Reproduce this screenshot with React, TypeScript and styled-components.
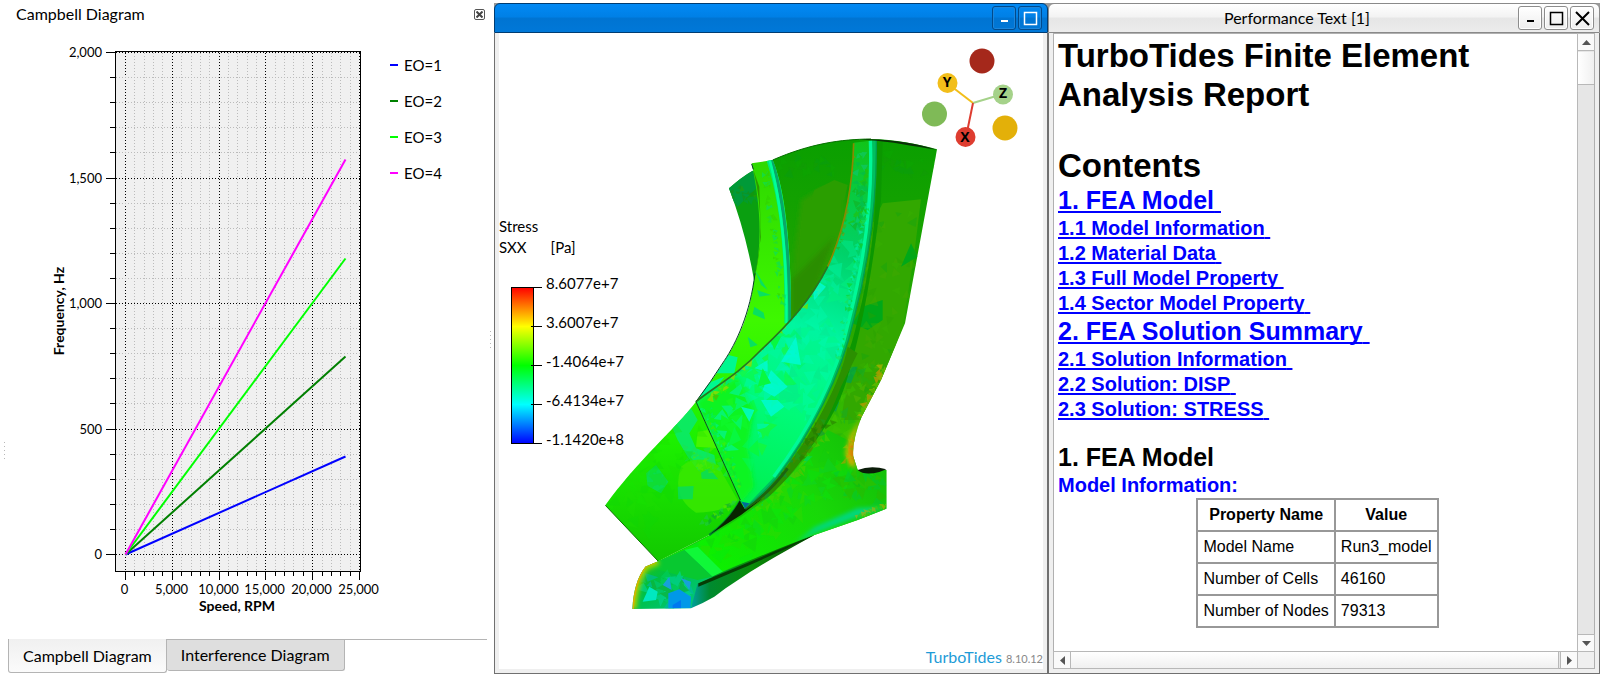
import React from 'react';
import styled, { createGlobalStyle, css } from 'styled-components';

const ui = '"Lato", "Open Sans", sans-serif';
const doc = '"Liberation Sans", Arial, sans-serif';

const Global = createGlobalStyle`
  *, *::before, *::after { box-sizing: border-box; }
  body { margin: 0; background: #fff; color: #000; font: 16px/20px ${ui}; }
  h1, h2, h3, p, ul { margin: 0; padding: 0; font-weight: inherit; }
  ul { list-style: none; }
  button { font: inherit; color: inherit; padding: 0; cursor: pointer; }
  svg { display: block; flex: none; }
`;

/* ---------- page ---------- */

const Workspace = styled.div`
  display: grid;
  grid-template-columns: 494fr 554fr 552fr;
  min-height: 100vh;
`;

/* ---------- diagram panel ---------- */

const Panel = styled.section`
  display: grid;
  grid-template-columns: 8px 1fr 7px;
  min-width: 0;
`;

const Grip = styled.span<{ $top: number }>`
  justify-self: center;
  width: 1px;
  height: 17px;
  margin-top: ${(p) => p.$top}px;
  background: repeating-linear-gradient(#b8b8b8 0 1px, transparent 1px 4px);
`;

const PanelBody = styled.div`
  display: flex;
  flex-direction: column;
  min-width: 0;
`;

const PanelHeader = styled.header`
  display: flex;
  justify-content: space-between;
  align-items: center;
  height: 28px;
  padding: 0 2px 0 8px;
`;

const PanelTitle = styled.h2`
  font-size: 16px;
`;

const CloseButton = styled.button`
  display: grid;
  place-items: center;
  width: 11px;
  height: 11px;
  border: 1px solid #555;
  border-radius: 2px;
  background: #fff;
`;

const ChartArea = styled.div`
  display: flex;
  flex: 1;
  gap: 6px;
`;

const Legend = styled.ul`
  padding-top: 19px;
`;

const LegendItem = styled.li<{ $color: string }>`
  display: flex;
  align-items: center;
  gap: 6px;
  height: 36px;
  font-size: 15px;
  &::before {
    content: '';
    width: 8px;
    height: 2px;
    background: ${(p) => p.$color};
  }
`;

const AxisText = styled.text<{ $bold?: boolean }>`
  font: ${(p) => (p.$bold ? 'bold 14px' : '13px')} ${ui};
`;

const TabBar = styled.div`
  display: flex;
  align-items: flex-start;
  height: 35px;
  border-top: 1px solid #b4b4b4;
`;

const Tab = styled.button<{ $active?: boolean }>`
  height: 31px;
  padding: 0 14px;
  border: 1px solid #b4b4b4;
  border-top: 0;
  border-left: 0;
  border-radius: 0 0 3px 3px;
  background: #dedede;
  font-size: 16px;
  ${(p) =>
    p.$active &&
    css`
      height: 34px;
      margin-top: -1px;
      border-left: 1px solid #b4b4b4;
      background: linear-gradient(#f0f0f0, #fbfbfb);
    `}
`;

/* ---------- windows ---------- */

const Frame = styled.section`
  display: flex;
  flex-direction: column;
  min-width: 0;
  padding-top: 3px;
  background: linear-gradient(#fff 3px, #999 3px, #999 12px, transparent 12px);
`;

const TitleBar = styled.header<{ $active?: boolean }>`
  display: flex;
  align-items: center;
  gap: 2px;
  height: 30px;
  padding: 0 5px;
  border: 1px solid ${(p) => (p.$active ? '#003c72' : '#8a8a8a')};
  border-radius: 6px 6px 0 0;
  background: ${(p) =>
    p.$active
      ? 'linear-gradient(#0289f4, #0080e6 45%, #0074d2 52%, #0078d8)'
      : 'linear-gradient(#fff, #f3f3f3 45%, #e6e6e6 52%, #ececec)'};
  color: ${(p) => (p.$active ? '#fff' : '#000')};
`;

const Title = styled.h2`
  flex: 1;
  padding-left: 24px;
  text-align: center;
  font-size: 16px;
`;

const FrameButton = styled.button<{ $active?: boolean }>`
  display: grid;
  place-items: center;
  width: 24px;
  height: 24px;
  border: 1px solid ${(p) => (p.$active ? '#004a8c' : '#8c8c8c')};
  border-radius: 3px;
  background: ${(p) => (p.$active ? 'transparent' : 'linear-gradient(#fff, #eee)')};
  box-shadow: inset 0 0 0 1px ${(p) => (p.$active ? '#1c86dc' : '#fff')};
`;

const FrameBody = styled.div<{ $pad: string }>`
  display: flex;
  flex: 1;
  min-height: 0;
  padding: ${(p) => p.$pad};
  border: 1px solid #707070;
  border-top: 0;
  background: #efefef;
`;

/* ---------- 3D view ---------- */

const Viewport = styled.div`
  position: relative;
  display: flex;
  flex: 1;
  justify-content: center;
  align-items: flex-start;
  padding-top: 87px;
  background: #fff;
`;

const Scale = styled.div`
  position: absolute;
  left: 0;
  top: 183px;
  font-size: 15px;
  line-height: 21px;
`;

const ScaleUnits = styled.p`
  display: flex;
  gap: 24px;
`;

const ScaleBody = styled.div`
  display: flex;
  gap: 4px;
  padding: 6px 0 0 12px;
`;

const ScaleBar = styled.svg`
  margin-top: 23px;
`;

const ScaleLabels = styled.ul`
  line-height: 39px;
`;

const Triad = styled.svg`
  position: absolute;
  top: 7px;
  right: 18px;
`;

const AxisName = styled.text`
  font: bold 14px "Open Sans", sans-serif;
  text-anchor: middle;
`;

const Brand = styled.p`
  position: absolute;
  right: 0;
  bottom: 0;
  display: flex;
  align-items: baseline;
  gap: 4px;
  color: #1e9bd7;
`;

const Version = styled.small`
  color: #888;
  font-size: 11px;
`;

/* ---------- report ---------- */

const Scroller = styled.div`
  display: grid;
  flex: 1;
  min-width: 0;
  grid-template: 1fr 17px / 1fr 17px;
  border: 1px solid #b0b0b0;
  background: #fff;
`;

const Report = styled.article`
  min-width: 0;
  padding: 2px 0 0 4px;
  font-family: ${doc};
`;

const ReportTitle = styled.h1`
  max-width: 480px;
  margin-bottom: 32px;
  font-size: 33px;
  line-height: 39px;
  font-weight: bold;
`;

const ContentsTitle = styled.h2`
  font-size: 33px;
  line-height: 39px;
  font-weight: bold;
`;

const Entry = styled.li<{ $sub?: boolean }>`
  font-size: ${(p) => (p.$sub ? 20 : 25)}px;
  line-height: ${(p) => (p.$sub ? 25 : 31)}px;
  font-weight: bold;
`;

const EntryLink = styled.a`
  color: #00f;
  text-decoration: underline 2px;
  text-underline-offset: 2px;
  text-decoration-skip-ink: none;
`;

const Chapter = styled.h2`
  margin-top: 20px;
  font-size: 25px;
  line-height: 31px;
  font-weight: bold;
`;

const Subchapter = styled.h3`
  color: #00f;
  font-size: 20px;
  line-height: 25px;
  font-weight: bold;
`;

const Properties = styled.table`
  margin: 0 auto;
  border-collapse: collapse;
  font-size: 16px;
  line-height: 20px;
  th, td {
    padding: 5px;
    border: 2px solid #989898;
    text-align: left;
  }
  th { text-align: center; }
`;

const Track = styled.div<{ $row?: boolean }>`
  display: flex;
  flex-direction: ${(p) => (p.$row ? 'row' : 'column')};
  justify-content: space-between;
  background: #e6e6e6;
  border: 0 solid #b8b8b8;
  border-width: ${(p) => (p.$row ? '1px 0 0' : '0 0 0 1px')};
`;

const Arrow = styled.button`
  display: grid;
  place-items: center;
  flex: none;
  width: 16px;
  height: 16px;
  border: 0;
  background: #fafafa;
  outline: 1px solid #b8b8b8;
`;

const Thumb = styled.div<{ $row?: boolean }>`
  ${(p) =>
    p.$row
      ? 'flex: 1; margin: 0 3px 0 1px; background: linear-gradient(#fff, #f0f0f0); outline: 1px solid #b8b8b8;'
      : 'height: 33px; margin: 2px 0 auto; background: linear-gradient(90deg, #fff, #f0f0f0); border-bottom: 1px solid #b8b8b8;'}
`;

const Corner = styled.div`
  background: #efefef;
  border: 1px solid #b8b8b8;
  border-width: 1px 0 0 1px;
`;

/* ---------- Campbell chart ---------- */

const series = [
  { name: 'EO=1', color: '#0000ff', end: 392 },
  { name: 'EO=2', color: '#008000', end: 788 },
  { name: 'EO=3', color: '#00ff00', end: 1180 },
  { name: 'EO=4', color: '#ff00ff', end: 1574 },
];

const px = (rpm: number) => Math.round(125 + (rpm * 234) / 25000) + 0.5;
const py = (hz: number) => Math.round(554 - (hz * 502) / 2000) + 0.5;
const range = (n: number) => Array.from({ length: n }, (_, i) => i);

function CampbellChart() {
  return (
    <svg width="376" height="600" viewBox="8 28 376 600" role="img" aria-label="Campbell Diagram">
      <rect x="115.5" y="51.5" width="245" height="520" fill="#f0f0f0" stroke="#000" />
      <g strokeWidth="1" strokeDasharray="1 2">
        {range(26).map((i) => (
          <line key={i} x1={px(i * 1000)} x2={px(i * 1000)} y1="53" y2="571" stroke={i % 5 ? '#bbb' : '#000'} />
        ))}
        {range(21).map((i) => (
          <line key={i} x1="116" x2="360" y1={py(i * 100)} y2={py(i * 100)} stroke={i % 5 ? '#bbb' : '#000'} />
        ))}
      </g>
      <g stroke="#000">
        {range(26).map((i) => (
          <line key={i} x1={px(i * 1000)} x2={px(i * 1000)} y1="572" y2={i % 5 ? 576 : 580} />
        ))}
        {range(21).map((i) => (
          <line key={i} x1={i % 5 ? 110 : 106} x2="115" y1={py(i * 100)} y2={py(i * 100)} />
        ))}
      </g>
      {series.map((s) => (
        <line key={s.name} x1={px(0)} y1={py(0)} x2={px(23500)} y2={py(s.end)} stroke={s.color} strokeWidth="2" />
      ))}
      {['0', '500', '1,000', '1,500', '2,000'].map((t, i) => (
        <AxisText key={t} x="102" y={py(i * 500) + 4} textAnchor="end">{t}</AxisText>
      ))}
      {['0', '5,000', '10,000', '15,000', '20,000', '25,000'].map((t, i) => (
        <AxisText key={t} x={px(i * 5000) - 1} y="594" textAnchor="middle">{t}</AxisText>
      ))}
      <AxisText $bold x="237" y="611" textAnchor="middle">Speed, RPM</AxisText>
      <AxisText $bold transform="rotate(-90 64 311)" x="64" y="311" textAnchor="middle">Frequency, Hz</AxisText>
    </svg>
  );
}

/* ---------- stressed impeller sector ---------- */

function random(seed: number) {
  let s = seed;
  return () => {
    s = (s * 16807) % 2147483647;
    return s / 2147483647;
  };
}

type Patch = { seed: number; count: number; box: number[]; size: number; colors: string[]; opacity?: number };

/* Mesh facets: small irregular triangles spread along the line box[0..3], within box[4] of it. */
function Facets({ seed, count, box, size, colors, opacity = 0.55 }: Patch) {
  const next = random(seed);
  const [x1, y1, x2, y2, spread] = box;
  return (
    <g opacity={opacity}>
      {range(count).map((i) => {
        const t = next();
        const cx = x1 + (x2 - x1) * t + (next() - 0.5) * 2 * spread;
        const cy = y1 + (y2 - y1) * t + (next() - 0.5) * spread;
        const turn = next() * 6.28;
        const pts = [0, 1, 2]
          .map((k) => {
            const r = size * (0.4 + next());
            const a = turn + k * 2.1;
            return `${Math.round(cx + r * Math.cos(a))},${Math.round(cy + r * Math.sin(a))}`;
          })
          .join(' ');
        return <polygon key={i} points={pts} fill={colors[Math.floor(next() * colors.length)]} />;
      })}
    </g>
  );
}

const shape = {
  hub: 'M575,120 C690,70 780,57 870,57 C940,58 1010,72 1068,88 L972,610 L900,780 L842,890 Q812,965 817,1010 L830,1050 L916,1050 L916,1166 L830,1200 L700,1245 C600,1300 480,1340 360,1390 L232,1324 L385,1245 L600,800 Z',
  back: 'M444,205 Q480,172 515,152 L545,160 L545,480 L519,480 Q495,340 444,205 Z',
  left: 'M512,130 L575,120 C605,190 632,330 630,620 L480,790 L345,845 L478,1140 C450,1190 420,1220 385,1245 L232,1324 L73,1156 C170,1020 280,930 345,845 C430,730 500,640 519,480 C548,360 535,240 512,130 Z',
  blade: 'M818,68 L886,60 C888,220 870,400 818,600 C780,770 690,940 590,1070 Q540,1130 490,1165 L478,1140 L345,845 C400,800 470,765 540,690 C620,615 690,540 740,440 C790,330 815,200 818,68 Z',
  lower: 'M830,1050 L916,1050 L916,1166 L830,1200 L700,1245 C600,1300 480,1320 395,1370 L345,1395 L193,1340 L232,1324 C370,1260 480,1200 570,1125 C650,1050 710,970 740,930 L800,960 L817,1010 Z',
  foot: 'M193,1340 L232,1324 L310,1290 L395,1370 L350,1390 L330,1465 L154,1467 Q158,1385 193,1340 Z',
  under: 'M350,1390 C460,1340 590,1285 700,1245 C580,1310 480,1370 400,1430 Q365,1450 330,1465 Q330,1410 350,1390 Z',
};

function Impeller() {
  return (
    <svg width="380" height="500" viewBox="0 0 1140 1500" role="img" aria-label="Stress SXX on the impeller sector">
      <defs>
        {Object.entries(shape).map(([id, d]) => (
          <clipPath key={id} id={`clip-${id}`}><path d={d} /></clipPath>
        ))}
        <linearGradient id="hub" x1="0" y1="0" x2="0" y2="1">
          <stop offset="0" stopColor="#0a9f00" />
          <stop offset=".2" stopColor="#16a200" />
          <stop offset=".5" stopColor="#2faa00" />
          <stop offset=".66" stopColor="#34c000" />
          <stop offset=".8" stopColor="#14c408" />
        </linearGradient>
        <linearGradient id="left" x1="0" y1="0" x2="0" y2="1">
          <stop offset="0" stopColor="#2fd800" />
          <stop offset=".4" stopColor="#3ef800" />
          <stop offset=".7" stopColor="#1cf000" />
          <stop offset="1" stopColor="#12c800" />
        </linearGradient>
        <linearGradient id="blade" gradientUnits="userSpaceOnUse" x1="860" y1="70" x2="460" y2="1120">
          <stop offset="0" stopColor="#10c41a" />
          <stop offset=".3" stopColor="#00d26a" />
          <stop offset=".52" stopColor="#00f5a0" />
          <stop offset=".75" stopColor="#00fa78" />
          <stop offset="1" stopColor="#00f050" />
        </linearGradient>
        <linearGradient id="lower" gradientUnits="userSpaceOnUse" x1="880" y1="1000" x2="400" y2="1340">
          <stop offset="0" stopColor="#14c008" />
          <stop offset=".4" stopColor="#18d808" />
          <stop offset="1" stopColor="#0cf000" />
        </linearGradient>
        <linearGradient id="foot" x1="0" y1="0" x2="1" y2="1">
          <stop offset="0" stopColor="#3cc800" />
          <stop offset=".4" stopColor="#00c040" />
          <stop offset="1" stopColor="#00c890" />
        </linearGradient>
        <linearGradient id="under" x1="0" y1="0" x2="1" y2="0">
          <stop offset="0" stopColor="#00a0a0" />
          <stop offset=".15" stopColor="#008a30" />
          <stop offset=".5" stopColor="#0a8c08" />
          <stop offset="1" stopColor="#064800" />
        </linearGradient>
        <filter id="soft" x="-30%" y="-30%" width="160%" height="160%"><feGaussianBlur stdDeviation="7" /></filter>
      </defs>

      <path d={shape.back} fill="#0a9f10" />
      <g clipPath="url(#clip-back)">
        <path d="M430,210 L520,140 L530,200 L470,260 Z" fill="#009a38" />
        <Facets seed={5} count={24} box={[460, 210, 530, 240, 30]} size={12} colors={['#2f9c00', '#1c8f10', '#009a40']} />
      </g>

      <path d={shape.hub} fill="url(#hub)" />
      <g clipPath="url(#clip-hub)">
        <path d="M660,240 L720,205 L790,200 L790,330 L740,440 L632,590 L640,400 Z" fill="#2a9e00" filter="url(#soft)" />
        <path d="M632,480 L760,350 L700,520 L632,600 Z" fill="#2b8e00" filter="url(#soft)" />
        <path d="M700,210 L760,180 L800,195 L790,240 L690,240 Z" fill="#2a9e00" />
        <path d="M880,300 L905,250 L1020,238 L1000,400 L965,620 L860,900 L780,900 L850,480 Z" fill="#32a800" />
        <path d="M845,560 L905,540 L905,600 L860,630 L815,610 Z M990,370 L1010,410 L960,440 Z" fill="#00a818" />
        <path d="M780,740 L830,740 L810,790 L785,785 Z M745,850 L775,845 L765,875 L738,868 Z" fill="#00a048" opacity=".8" />
        <Facets seed={17} count={60} box={[620, 140, 1040, 130, 60]} size={14} colors={['#0ca800', '#14980a', '#089c18']} opacity={0.35} />
        <Facets seed={23} count={70} box={[940, 300, 850, 800, 80]} size={15} colors={['#2aa000', '#44a800', '#12a410', '#38b000']} opacity={0.4} />
        <Facets seed={29} count={50} box={[860, 740, 770, 980, 60]} size={15} colors={['#20b010', '#3cc400', '#10b030', '#5cb800', '#48c800']} opacity={0.45} />
        <Facets seed={31} count={30} box={[905, 740, 842, 890, 8]} size={12} colors={['#b0b000', '#80b800', '#c89800', '#60c000']} opacity={0.7} />
        <path d="M888,60 C890,220 880,400 830,600 C795,760 700,950 590,1075 L385,1245 L560,1120 C700,990 770,880 800,770 C840,640 870,480 900,240 L905,60 Z" fill="#0b9700" />
        <path d="M800,680 C780,790 690,950 590,1075 L480,1170 L385,1245 L570,1125 C670,1030 735,920 780,800 L830,700 Z" fill="#2b9000" />
        <Facets seed={37} count={44} box={[740, 900, 540, 1130, 20]} size={12} colors={['#287800', '#0c9440', '#4c8800', '#207000', '#18a020']} />
      </g>

      <path d={shape.lower} fill="url(#lower)" />
      <g clipPath="url(#clip-lower)">
        <Facets seed={41} count={110} box={[800, 1010, 420, 1290, 90]} size={24} colors={['#14cc10', '#24dc00', '#0cd430', '#38d800', '#08e810']} opacity={0.4} />
        <Facets seed={43} count={36} box={[730, 960, 520, 1180, 20]} size={16} colors={['#50d000', '#00d860', '#3ccc00', '#68c000']} />
        <Facets seed={47} count={34} box={[800, 1060, 860, 1120, 55]} size={20} colors={['#30b400', '#12b018', '#40b800', '#00c440']} opacity={0.4} />
        <path d="M916,1160 L830,1190 L700,1240 L640,1272 L700,1222 L830,1165 Z" fill="#00d880" filter="url(#soft)" />
        <Facets seed={53} count={20} box={[916, 1155, 830, 1190, 8]} size={9} colors={['#b8c000', '#50c800', '#d0a800']} />
        <path d="M310,1290 L350,1280 L430,1360 L395,1372 Z" fill="#10f838" />
      </g>
      <g clipPath="url(#clip-hub)">
        <path d="M842,890 L808,945 L792,1000 L805,1035 L826,1046 L816,1008 Q812,965 842,890 Z" fill="#c8b800" filter="url(#soft)" />
        <path d="M822,955 L808,975 L806,1016 L820,1030 Z" fill="#f07000" filter="url(#soft)" />
        <Facets seed={109} count={16} box={[812, 950, 800, 1030, 12]} size={10} colors={['#b0c000', '#e09000', '#80c000']} opacity={0.5} />
      </g>

      <path d={shape.left} fill="url(#left)" />
      <g clipPath="url(#clip-left)">
        <path d="M517,150 C545,260 545,380 519,480 L540,350 L535,200 Z" fill="#2c9800" />
        <path d="M556,120 L580,118 C612,220 634,380 632,610 L610,610 C612,420 602,260 556,120 Z" fill="#00e878" />
        <path d="M569,120 L577,118 C609,220 632,380 631,610 L622,610 C622,420 608,260 569,120 Z" fill="#08a868" />
        <path d="M562,120 L570,120 C602,240 622,380 619,610 L613,610 C614,420 600,260 562,120 Z" fill="#00ff98" />
        <Facets seed={59} count={50} box={[555, 160, 605, 560, 10]} size={8} colors={['#18d840', '#30d000', '#00dc70']} />
        <path d="M522,450 L560,510 L540,495 Z M528,510 L570,525 L535,530 Z M520,560 L548,578 L552,598 L515,582 Z M500,650 L530,675 L508,682 Z" fill="#08e060" />
        <path d="M420,700 L470,712 L460,760 L400,760 Z M380,790 L430,770 L400,810 L350,835 Z" fill="#00f890" />
        <path d="M270,915 L330,865 L350,900 L325,940 L345,985 L400,1005 L405,1035 L350,1050 L320,1010 L290,960 Z" fill="#08e878" opacity=".8" />
        <path d="M350,935 L380,930 L412,985 L345,980 Z" fill="#48f400" />
        <path d="M300,1040 Q345,1000 410,1035 L470,1140 Q440,1175 345,1178 Q270,1130 300,1040 Z" fill="#3ce800" opacity=".8" />
        <path d="M195,1060 L225,1035 L262,1085 L240,1120 L200,1098 Z M290,1100 L338,1098 L335,1138 L292,1138 Z M360,1058 L385,1045 L412,1078 L362,1076 Z" fill="#08dc58" opacity=".85" />
        <Facets seed={61} count={40} box={[350, 1000, 400, 1060, 40]} size={12} colors={['#38e800', '#20e050', '#58e800']} />
        <Facets seed={67} count={60} box={[300, 930, 150, 1200, 90]} size={24} colors={['#18e400', '#20dc00', '#10d808']} opacity={0.3} />
        <Facets seed={71} count={26} box={[465, 1145, 370, 1210, 12]} size={8} colors={['#20c850', '#109c40', '#60e000']} />
      </g>
      <path d="M478,1142 C450,1190 420,1220 385,1245" fill="none" stroke="#008a30" strokeWidth="7" />
      <path d="M512,132 L517,148 M522,460 C508,580 465,670 430,722 Q390,785 345,845" fill="none" stroke="#063c28" strokeWidth="3" />
      <path d="M73,1156 L232,1324" fill="none" stroke="#0c7000" strokeWidth="3" />

      <path d="M476,1142 L492,1168 L545,1135 L480,1185 L385,1244 Q445,1200 476,1142 Z" fill="#082400" />
      <path d="M492,1166 Q560,1125 620,1045" fill="none" stroke="#1c6410" strokeWidth="8" />

      <path d={shape.blade} fill="url(#blade)" />
      <g clipPath="url(#clip-blade)">
        <path d="M345,845 L470,770 L520,870 L500,980 L520,1100 L480,1150 Z" fill="#08f420" filter="url(#soft)" />
        <Facets seed={73} count={60} box={[805, 110, 770, 380, 14]} size={9} colors={['#5ca800', '#988c00', '#18a838', '#2cb000']} />
        <Facets seed={79} count={50} box={[845, 100, 830, 330, 18]} size={12} colors={['#00b850', '#28c000', '#10c878', '#14b020']} />
        <Facets seed={83} count={90} box={[780, 400, 640, 900, 75]} size={26} colors={['#00f098', '#00fab0', '#08e48c', '#00f880']} opacity={0.4} />
        <Facets seed={89} count={90} box={[600, 640, 450, 1000, 80]} size={23} colors={['#00f860', '#10fa30', '#00f8a0', '#00f4c0', '#20f820']} opacity={0.5} />
        <Facets seed={97} count={70} box={[735, 480, 390, 835, 16]} size={12} colors={['#70e000', '#98d800', '#30f010', '#50c000', '#00e870']} opacity={0.8} />
        <path d="M645,650 L660,735 L600,725 Z M535,735 L560,720 L560,755 L520,745 Z M570,750 L620,800 L580,830 L545,810 Z M540,840 L590,840 L610,860 L570,890 Z M480,860 L520,870 L505,905 Z M690,470 L735,500 L700,540 Z" fill="#00fad8" opacity=".8" />
        <path d="M545,745 L570,790 L530,800 Z M560,640 L600,650 L580,690 Z M500,990 L530,960 L535,1010 Z M440,980 L460,920 L480,960 Z" fill="#08f840" />
        <Facets seed={101} count={110} box={[370, 870, 470, 1110, 22]} size={7} colors={['#00e870', '#50e800', '#00f0a0', '#18d830']} />
        <path d="M870,60 C876,220 858,400 806,600 C770,770 680,940 580,1070 L490,1165 L600,1075 C700,940 790,770 826,600 C878,400 892,220 886,60 Z" fill="#00c060" />
        <path d="M868,60 C874,220 856,400 804,600 C768,770 678,940 578,1070" fill="none" stroke="#00f898" strokeWidth="10" />
        <Facets seed={103} count={90} box={[858, 250, 770, 720, 7]} size={8} colors={['#20e050', '#00f8c0', '#10d020', '#00f0a0']} />
      </g>
      <path d="M886,60 C888,220 870,400 818,600 C780,770 690,940 590,1070 Q540,1130 490,1165" fill="none" stroke="#009c50" strokeWidth="4" />
      <path d="M818,70 C815,200 790,330 740,440" fill="none" stroke="#8a8800" strokeWidth="5" />
      <path d="M740,440 C690,540 620,615 540,690 C470,765 400,800 345,845" fill="none" stroke="#2a7420" strokeWidth="5" />
      <path d="M345,845 L478,1140" fill="none" stroke="#0a4a18" strokeWidth="3" />
      <path d="M478,1140 L492,1165 L505,1150 L482,1145 Z" fill="#006c98" />

      <path d={shape.under} fill="url(#under)" />
      <path d="M352,1390 C460,1345 590,1290 700,1246 C590,1300 460,1355 352,1400 Z" fill="#063c04" />
      <path d={shape.foot} fill="url(#foot)" />
      <g clipPath="url(#clip-foot)">
        <path d="M193,1340 L310,1290 L395,1370 L350,1380 L225,1348 Z" fill="#08c830" />
        <Facets seed={107} count={40} box={[220, 1380, 310, 1440, 50]} size={22} colors={['#00d8a0', '#00c878', '#00b8b0', '#10b040', '#00d060']} />
        <path d="M262,1420 L295,1408 L330,1430 L328,1465 L262,1465 Z" fill="#0098e8" />
        <path d="M245,1395 L265,1370 L272,1410 Z M300,1375 L330,1385 L325,1410 Z" fill="#18a0d8" />
        <path d="M205,1400 L230,1415 L225,1440 L185,1445 Z" fill="#00e8c0" />
        <path d="M275,1455 L300,1440 L300,1465 L275,1465 Z" fill="#0078f0" />
        <path d="M232,1324 L193,1340 Q162,1385 156,1467" fill="none" stroke="#a0d000" strokeWidth="22" filter="url(#soft)" />
        <path d="M225,1326 L193,1340 Q162,1385 156,1467" fill="none" stroke="#d8b000" strokeWidth="5" />
      </g>

      <path d="M830,1050 Q870,1034 916,1048 L895,1056 Q850,1068 830,1050 Z" fill="#0a1c08" />
      <path d="M575,120 C690,70 780,58 870,57" fill="none" stroke="#067000" strokeWidth="3" />
      <path d="M840,58 C930,55 1010,72 1068,89 C1000,80 930,64 860,60 Z" fill="#0a3008" />
    </svg>
  );
}

const stops = ['#ff0000', '#ffff00', '#00ff00', '#00ffff', '#0000ff'];

function StressScale() {
  return (
    <Scale>
      <p>Stress</p>
      <ScaleUnits><span>SXX</span><span>[Pa]</span></ScaleUnits>
      <ScaleBody>
        <ScaleBar width="31" height="158" viewBox="0 0 31 158" aria-hidden="true">
          <defs>
            <linearGradient id="stress" x1="0" y1="0" x2="0" y2="1">
              {stops.map((c, i) => <stop key={c} offset={i / 4} stopColor={c} />)}
            </linearGradient>
          </defs>
          <rect x=".5" y=".5" width="22" height="156" fill="url(#stress)" stroke="#000" />
          {stops.map((c, i) => (
            <line key={c} x1={i % 4 ? 20 : 22} x2="31" y1={i * 39 + 0.5} y2={i * 39 + 0.5} stroke="#000" />
          ))}
        </ScaleBar>
        <ScaleLabels>
          {['8.6077e+7', '3.6007e+7', '-1.4064e+7', '-6.4134e+7', '-1.1420e+8'].map((t) => <li key={t}>{t}</li>)}
        </ScaleLabels>
      </ScaleBody>
    </Scale>
  );
}

function AxisTriad() {
  return (
    <Triad width="110" height="115" viewBox="915 40 110 115" role="img" aria-label="View axes">
      <g strokeWidth="2">
        <line x1="973" y1="103" x2="947" y2="83" stroke="#f2be1a" />
        <line x1="973" y1="103" x2="1003" y2="94" stroke="#a5d28a" />
        <line x1="973" y1="103" x2="966" y2="137" stroke="#de3d30" />
      </g>
      <circle cx="982" cy="61" r="12.5" fill="#a5281b" />
      <circle cx="934.5" cy="114" r="12.5" fill="#7fba57" />
      <circle cx="1005" cy="128" r="12.5" fill="#e3b009" />
      <circle cx="947.5" cy="83" r="10" fill="#f2be1a" />
      <circle cx="1003" cy="94.5" r="10" fill="#a5d28a" />
      <circle cx="965.5" cy="137" r="10" fill="#de3d30" />
      <AxisName x="947" y="87">Y</AxisName>
      <AxisName x="1003" y="98">Z</AxisName>
      <AxisName x="965" y="142">X</AxisName>
    </Triad>
  );
}

/* ---------- small icons ---------- */

const glyphs = {
  minimize: <path d="M5 11h7" strokeWidth="2" />,
  maximize: <path d="M2.5 2.5h12v12h-12z" strokeWidth="1.5" />,
  close: <path d="M2 2l13 13M15 2L2 15" strokeWidth="2" />,
};

function WindowButton({ kind, active }: { kind: keyof typeof glyphs; active?: boolean }) {
  return (
    <FrameButton $active={active} aria-label={kind}>
      <svg width="17" height="17" viewBox="0 0 17 17" fill="none" stroke="currentColor">{glyphs[kind]}</svg>
    </FrameButton>
  );
}

const arrows = { up: 'M0 7l4.5-5L9 7z', down: 'M0 2l4.5 5L9 2z', left: 'M7 0L2 4.5 7 9z', right: 'M2 0l5 4.5L2 9z' };

function ScrollArrow({ dir }: { dir: keyof typeof arrows }) {
  return (
    <Arrow aria-label={`Scroll ${dir}`}>
      <svg width="9" height="9" viewBox="0 0 9 9" fill="#555"><path d={arrows[dir]} /></svg>
    </Arrow>
  );
}

/* ---------- app ---------- */

const contents = [
  { text: '1. FEA Model' },
  { text: '1.1 Model Information', sub: true },
  { text: '1.2 Material Data', sub: true },
  { text: '1.3 Full Model Property', sub: true },
  { text: '1.4 Sector Model Property', sub: true },
  { text: '2. FEA Solution Summary' },
  { text: '2.1 Solution Information', sub: true },
  { text: '2.2 Solution: DISP', sub: true },
  { text: '2.3 Solution: STRESS', sub: true },
];

const properties = [
  ['Model Name', 'Run3_model'],
  ['Number of Cells', '46160'],
  ['Number of Nodes', '79313'],
];

export default function App() {
  return (
    <Workspace>
      <Global />
      <Panel>
        <Grip $top={442} />
        <PanelBody>
          <PanelHeader>
            <PanelTitle>Campbell Diagram</PanelTitle>
            <CloseButton aria-label="Close panel">
              <svg width="7" height="7" viewBox="0 0 7 7" stroke="#444" strokeWidth="2"><path d="M.5.5l6 6M6.5.5l-6 6" /></svg>
            </CloseButton>
          </PanelHeader>
          <ChartArea>
            <CampbellChart />
            <Legend>
              {series.map((s) => <LegendItem key={s.name} $color={s.color}>{s.name}</LegendItem>)}
            </Legend>
          </ChartArea>
          <TabBar role="tablist">
            <Tab role="tab" aria-selected="true" $active>Campbell Diagram</Tab>
            <Tab role="tab" aria-selected="false">Interference Diagram</Tab>
          </TabBar>
        </PanelBody>
        <Grip $top={331} />
      </Panel>

      <Frame>
        <TitleBar $active>
          <Title />
          <WindowButton kind="minimize" active />
          <WindowButton kind="maximize" active />
        </TitleBar>
        <FrameBody $pad="0 4px 4px 4px">
          <Viewport>
            <Impeller />
            <StressScale />
            <AxisTriad />
            <Brand>TurboTides <Version>8.10.12</Version></Brand>
          </Viewport>
        </FrameBody>
      </Frame>

      <Frame>
        <TitleBar>
          <Title>Performance Text [1]</Title>
          <WindowButton kind="minimize" />
          <WindowButton kind="maximize" />
          <WindowButton kind="close" />
        </TitleBar>
        <FrameBody $pad="0 4px 4px 4px">
          <Scroller>
            <Report>
              <ReportTitle>TurboTides Finite Element Analysis Report</ReportTitle>
              <ContentsTitle>Contents</ContentsTitle>
              <ul>
                {contents.map((c) => (
                  <Entry key={c.text} $sub={c.sub}><EntryLink href="#">{c.text}{'\u00a0'}</EntryLink></Entry>
                ))}
              </ul>
              <Chapter>1. FEA Model</Chapter>
              <Subchapter>Model Information:</Subchapter>
              <Properties>
                <thead><tr><th scope="col">Property Name</th><th scope="col">Value</th></tr></thead>
                <tbody>
                  {properties.map(([name, value]) => <tr key={name}><td>{name}</td><td>{value}</td></tr>)}
                </tbody>
              </Properties>
            </Report>
            <Track>
              <ScrollArrow dir="up" />
              <Thumb />
              <ScrollArrow dir="down" />
            </Track>
            <Track $row>
              <ScrollArrow dir="left" />
              <Thumb $row />
              <ScrollArrow dir="right" />
            </Track>
            <Corner />
          </Scroller>
        </FrameBody>
      </Frame>
    </Workspace>
  );
}
